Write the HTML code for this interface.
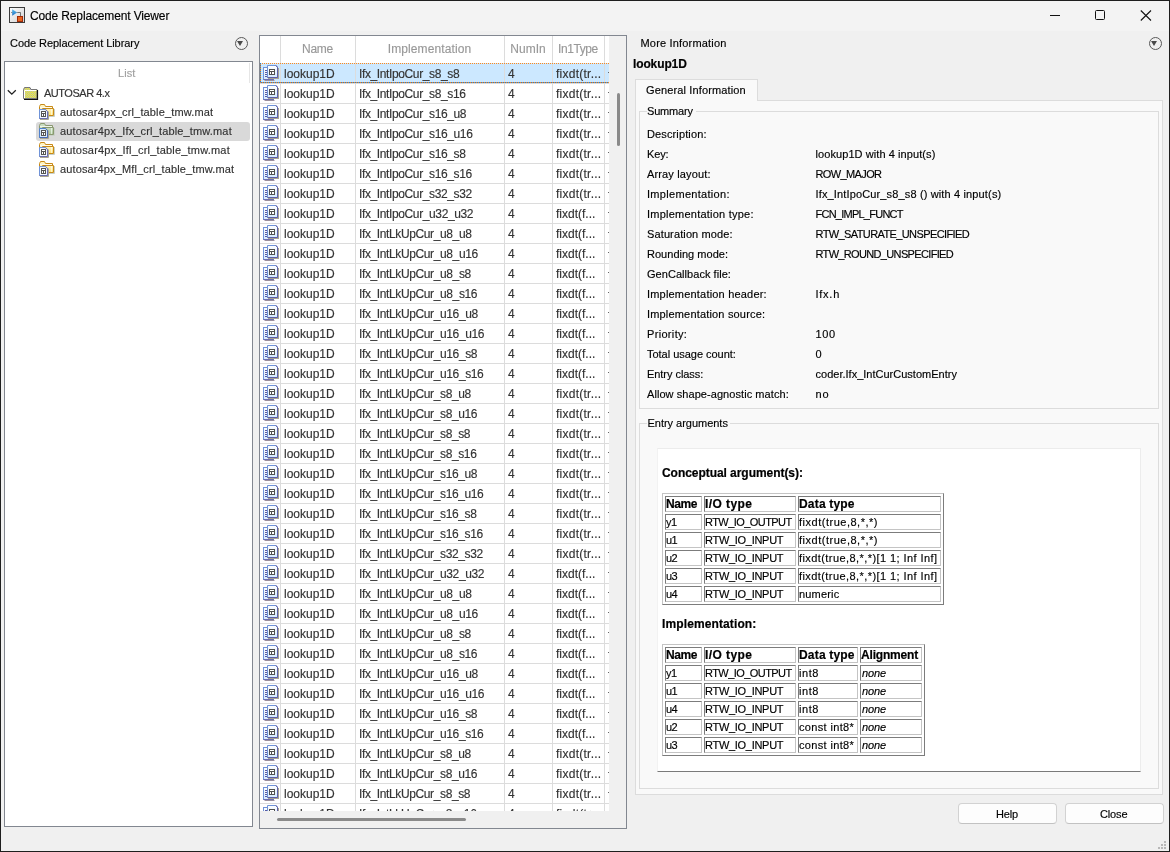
<!DOCTYPE html>
<html><head><meta charset="utf-8"><title>Code Replacement Viewer</title>
<style>
*{margin:0;padding:0;box-sizing:border-box}
html,body{width:1170px;height:852px;overflow:hidden}
body{position:relative;background:#f0f0f0;font-family:"Liberation Sans",sans-serif;font-size:11px;color:#000}
.a{position:absolute}
.t{position:absolute;white-space:nowrap;line-height:20px;height:20px;-webkit-text-stroke:0.15px currentColor}
.t.b{-webkit-text-stroke:0.2px #000}
.ddc{position:absolute;width:13px;height:13px;border:1.3px solid #585858;border-radius:50%}
.ddc:after{content:"";position:absolute;left:1.9px;top:3.3px;border-left:3.9px solid transparent;border-right:3.9px solid transparent;border-top:5.2px solid #4a4a4a}
.btn{position:absolute;top:803px;width:99px;height:21px;background:#fdfdfd;border:1px solid #d2d2d2;border-bottom-color:#c2c2c2;border-radius:4px}
</style></head><body><div class="a" style="left:0;top:0;width:1170px;height:852px;will-change:transform">
<div class="a" style="left:1px;top:1px;width:1168px;height:30px;background:#f3f3f3"></div>
<svg class="a" style="left:9px;top:7px" width="16" height="16" viewBox="0 0 16 16"><defs><linearGradient id="ig" x1="0" y1="0" x2="1" y2="1"><stop offset="0" stop-color="#ffffff"/><stop offset="1" stop-color="#d0d0d0"/></linearGradient><linearGradient id="tri" x1="0" y1="0" x2="0" y2="1"><stop offset="0" stop-color="#5cc0f0"/><stop offset="1" stop-color="#1f6fc0"/></linearGradient></defs><rect x="0.5" y="0.5" width="15" height="15" fill="url(#ig)" stroke="#3c3c3c"/><path d="M3.2 2.2v6.6l5-3.3z" fill="url(#tri)"/><path d="M2.2 5.5h1M8.2 5.5h3.3v4" stroke="#444" fill="none" stroke-width="0.7"/><rect x="8.5" y="9.5" width="5" height="5" fill="#e8641e" stroke="#a02a08" stroke-width="1"/></svg>
<div class="t" style="left:30px;top:6px;font-size:12px;color:#000;letter-spacing:-0.142px;">Code Replacement Viewer</div>
<div class="a" style="left:1050px;top:15px;width:10px;height:1px;background:#111"></div>
<div class="a" style="left:1095px;top:10px;width:10px;height:10px;border:1px solid #111;border-radius:1.5px"></div>
<svg class="a" style="left:1140px;top:10px" width="12" height="11" viewBox="0 0 12 11"><path d="M0.8 0.5L11 10.5M11 0.5L0.8 10.5" stroke="#111" stroke-width="1.1"/></svg>
<div class="t" style="left:10px;top:33px;font-size:11px;color:#000;letter-spacing:-0.063px;">Code Replacement Library</div>
<div class="ddc" style="left:234.5px;top:36.5px"></div>
<div class="a" style="left:4px;top:61px;width:249px;height:766px;background:#fff;border:1px solid #828790"></div>
<div class="t" style="left:118px;top:63px;font-size:11px;color:#a0a0a0;letter-spacing:0.094px;">List</div>
<div class="a" style="left:249px;top:63px;width:1px;height:20px;background:#e6e6e6"></div>
<svg class="a" style="left:7px;top:89px" width="10" height="7" viewBox="0 0 10 7"><path d="M0.8 1.2L4.8 5.2L8.8 1.2" stroke="#222" stroke-width="1.3" fill="none"/></svg>
<svg class="a" style="left:22px;top:86px" width="17" height="15" viewBox="0 0 17 15"><defs><pattern id="chk" width="2" height="2" patternUnits="userSpaceOnUse"><rect width="2" height="2" fill="#b4b4c8"/><rect width="1" height="1" fill="#ffff00"/><rect x="1" y="1" width="1" height="1" fill="#f0f020"/></pattern></defs><path d="M1.5 12.5V3.5l1-2h5.5l1 2h6v9z" fill="url(#chk)" stroke="#777"/><path d="M2.5 12V4.5h12" stroke="#fff" fill="none"/><path d="M2 13.5h13.5V4" stroke="#111" fill="none" stroke-width="1.2"/></svg>
<div class="t" style="left:44px;top:83px;font-size:11px;color:#333;letter-spacing:-0.481px;">AUTOSAR 4.x</div>
<div class="a" style="left:36px;top:122px;width:214px;height:19px;background:#d9d9d9;border-radius:3px"></div>
<svg class="a" style="left:38px;top:103px" width="18" height="18" viewBox="0 0 18 18"><defs><linearGradient id="fg103" x1="0" y1="0" x2="0" y2="1"><stop offset="0" stop-color="#fff4c0"/><stop offset="1" stop-color="#ffe070"/></linearGradient></defs><path d="M1.5 12.5V3.5l1-2h4l1 2h7v9z" fill="#fff4c0" stroke="#c88a18"/><path d="M2 4.5h12" stroke="#fff" stroke-opacity="0.7"/><path d="M4.5 5.5h11v7h-11z" fill="url(#fg103)" stroke="#c88a18"/><path d="M13.5 6v6" stroke="#fff" stroke-opacity="0.6"/><path d="M16.5 6v7.5h-11" stroke="#c8d0c8" fill="none"/><path d="M1.5 6.5h6l2 2v7h-8z" fill="#f2f8ff" stroke="#6f93d8"/><path d="M9.5 8.5v7h-8" stroke="#6b6db0" fill="none"/><path d="M2 16.5h8.5v-8" stroke="#a8a490" fill="none"/><path d="M7 6.5h1l1.5 1.5v1z" fill="#6b6db0"/><rect x="3.5" y="8.5" width="4" height="5" fill="#fff" stroke="#555"/><path d="M4 10.5h3M5.5 11v2" stroke="#555"/></svg>
<div class="t" style="left:60px;top:102px;font-size:11px;color:#333;letter-spacing:0.141px;">autosar4px_crl_table_tmw.mat</div>
<svg class="a" style="left:38px;top:122px" width="18" height="18" viewBox="0 0 18 18"><defs><linearGradient id="fg122" x1="0" y1="0" x2="0" y2="1"><stop offset="0" stop-color="#c8dcc0"/><stop offset="1" stop-color="#a8c498"/></linearGradient></defs><path d="M1.5 12.5V3.5l1-2h4l1 2h7v9z" fill="#c8dcc0" stroke="#8a9870"/><path d="M2 4.5h12" stroke="#fff" stroke-opacity="0.7"/><path d="M4.5 5.5h11v7h-11z" fill="url(#fg122)" stroke="#8a9870"/><path d="M13.5 6v6" stroke="#fff" stroke-opacity="0.6"/><path d="M16.5 6v7.5h-11" stroke="#c8d0c8" fill="none"/><path d="M1.5 6.5h6l2 2v7h-8z" fill="#d8eafc" stroke="#4f80cc"/><path d="M9.5 8.5v7h-8" stroke="#4868b0" fill="none"/><path d="M2 16.5h8.5v-8" stroke="#a8a490" fill="none"/><path d="M7 6.5h1l1.5 1.5v1z" fill="#4868b0"/><rect x="3.5" y="8.5" width="4" height="5" fill="#fff" stroke="#555"/><path d="M4 10.5h3M5.5 11v2" stroke="#555"/></svg>
<div class="t" style="left:60px;top:121px;font-size:11px;color:#333;letter-spacing:0.154px;">autosar4px_Ifx_crl_table_tmw.mat</div>
<svg class="a" style="left:38px;top:141px" width="18" height="18" viewBox="0 0 18 18"><defs><linearGradient id="fg141" x1="0" y1="0" x2="0" y2="1"><stop offset="0" stop-color="#fff4c0"/><stop offset="1" stop-color="#ffe070"/></linearGradient></defs><path d="M1.5 12.5V3.5l1-2h4l1 2h7v9z" fill="#fff4c0" stroke="#c88a18"/><path d="M2 4.5h12" stroke="#fff" stroke-opacity="0.7"/><path d="M4.5 5.5h11v7h-11z" fill="url(#fg141)" stroke="#c88a18"/><path d="M13.5 6v6" stroke="#fff" stroke-opacity="0.6"/><path d="M16.5 6v7.5h-11" stroke="#c8d0c8" fill="none"/><path d="M1.5 6.5h6l2 2v7h-8z" fill="#f2f8ff" stroke="#6f93d8"/><path d="M9.5 8.5v7h-8" stroke="#6b6db0" fill="none"/><path d="M2 16.5h8.5v-8" stroke="#a8a490" fill="none"/><path d="M7 6.5h1l1.5 1.5v1z" fill="#6b6db0"/><rect x="3.5" y="8.5" width="4" height="5" fill="#fff" stroke="#555"/><path d="M4 10.5h3M5.5 11v2" stroke="#555"/></svg>
<div class="t" style="left:60px;top:140px;font-size:11px;color:#333;letter-spacing:0.188px;">autosar4px_Ifl_crl_table_tmw.mat</div>
<svg class="a" style="left:38px;top:160px" width="18" height="18" viewBox="0 0 18 18"><defs><linearGradient id="fg160" x1="0" y1="0" x2="0" y2="1"><stop offset="0" stop-color="#fff4c0"/><stop offset="1" stop-color="#ffe070"/></linearGradient></defs><path d="M1.5 12.5V3.5l1-2h4l1 2h7v9z" fill="#fff4c0" stroke="#c88a18"/><path d="M2 4.5h12" stroke="#fff" stroke-opacity="0.7"/><path d="M4.5 5.5h11v7h-11z" fill="url(#fg160)" stroke="#c88a18"/><path d="M13.5 6v6" stroke="#fff" stroke-opacity="0.6"/><path d="M16.5 6v7.5h-11" stroke="#c8d0c8" fill="none"/><path d="M1.5 6.5h6l2 2v7h-8z" fill="#f2f8ff" stroke="#6f93d8"/><path d="M9.5 8.5v7h-8" stroke="#6b6db0" fill="none"/><path d="M2 16.5h8.5v-8" stroke="#a8a490" fill="none"/><path d="M7 6.5h1l1.5 1.5v1z" fill="#6b6db0"/><rect x="3.5" y="8.5" width="4" height="5" fill="#fff" stroke="#555"/><path d="M4 10.5h3M5.5 11v2" stroke="#555"/></svg>
<div class="t" style="left:60px;top:159px;font-size:11px;color:#333;letter-spacing:0.130px;">autosar4px_Mfl_crl_table_tmw.mat</div>
<div class="a" style="left:259px;top:35px;width:368px;height:794px;background:#f0f0f0;border:1px solid #828790"></div>
<div class="a" style="left:260px;top:36px;width:349px;height:775px;background:#fff"></div>
<svg class="a" width="0" height="0" style="left:0;top:0"><defs><linearGradient id="dg" x1="0" y1="0" x2="0" y2="1"><stop offset="0" stop-color="#ffffff"/><stop offset="1" stop-color="#d4eaff"/></linearGradient></defs></svg>
<div class="a" style="left:260px;top:63px;width:349px;height:20px;background:#cce8ff"></div>
<div class="a" style="left:260px;top:83px;width:349px;height:1px;background:#dcdcdc"></div>
<div class="a" style="left:260px;top:103px;width:349px;height:1px;background:#dcdcdc"></div>
<div class="a" style="left:260px;top:123px;width:349px;height:1px;background:#dcdcdc"></div>
<div class="a" style="left:260px;top:143px;width:349px;height:1px;background:#dcdcdc"></div>
<div class="a" style="left:260px;top:163px;width:349px;height:1px;background:#dcdcdc"></div>
<div class="a" style="left:260px;top:183px;width:349px;height:1px;background:#dcdcdc"></div>
<div class="a" style="left:260px;top:203px;width:349px;height:1px;background:#dcdcdc"></div>
<div class="a" style="left:260px;top:223px;width:349px;height:1px;background:#dcdcdc"></div>
<div class="a" style="left:260px;top:243px;width:349px;height:1px;background:#dcdcdc"></div>
<div class="a" style="left:260px;top:263px;width:349px;height:1px;background:#dcdcdc"></div>
<div class="a" style="left:260px;top:283px;width:349px;height:1px;background:#dcdcdc"></div>
<div class="a" style="left:260px;top:303px;width:349px;height:1px;background:#dcdcdc"></div>
<div class="a" style="left:260px;top:323px;width:349px;height:1px;background:#dcdcdc"></div>
<div class="a" style="left:260px;top:343px;width:349px;height:1px;background:#dcdcdc"></div>
<div class="a" style="left:260px;top:363px;width:349px;height:1px;background:#dcdcdc"></div>
<div class="a" style="left:260px;top:383px;width:349px;height:1px;background:#dcdcdc"></div>
<div class="a" style="left:260px;top:403px;width:349px;height:1px;background:#dcdcdc"></div>
<div class="a" style="left:260px;top:423px;width:349px;height:1px;background:#dcdcdc"></div>
<div class="a" style="left:260px;top:443px;width:349px;height:1px;background:#dcdcdc"></div>
<div class="a" style="left:260px;top:463px;width:349px;height:1px;background:#dcdcdc"></div>
<div class="a" style="left:260px;top:483px;width:349px;height:1px;background:#dcdcdc"></div>
<div class="a" style="left:260px;top:503px;width:349px;height:1px;background:#dcdcdc"></div>
<div class="a" style="left:260px;top:523px;width:349px;height:1px;background:#dcdcdc"></div>
<div class="a" style="left:260px;top:543px;width:349px;height:1px;background:#dcdcdc"></div>
<div class="a" style="left:260px;top:563px;width:349px;height:1px;background:#dcdcdc"></div>
<div class="a" style="left:260px;top:583px;width:349px;height:1px;background:#dcdcdc"></div>
<div class="a" style="left:260px;top:603px;width:349px;height:1px;background:#dcdcdc"></div>
<div class="a" style="left:260px;top:623px;width:349px;height:1px;background:#dcdcdc"></div>
<div class="a" style="left:260px;top:643px;width:349px;height:1px;background:#dcdcdc"></div>
<div class="a" style="left:260px;top:663px;width:349px;height:1px;background:#dcdcdc"></div>
<div class="a" style="left:260px;top:683px;width:349px;height:1px;background:#dcdcdc"></div>
<div class="a" style="left:260px;top:703px;width:349px;height:1px;background:#dcdcdc"></div>
<div class="a" style="left:260px;top:723px;width:349px;height:1px;background:#dcdcdc"></div>
<div class="a" style="left:260px;top:743px;width:349px;height:1px;background:#dcdcdc"></div>
<div class="a" style="left:260px;top:763px;width:349px;height:1px;background:#dcdcdc"></div>
<div class="a" style="left:260px;top:783px;width:349px;height:1px;background:#dcdcdc"></div>
<div class="a" style="left:260px;top:803px;width:349px;height:1px;background:#dcdcdc"></div>
<div class="a" style="left:280px;top:36px;width:1px;height:775px;background:#dcdcdc"></div>
<div class="a" style="left:355px;top:36px;width:1px;height:775px;background:#dcdcdc"></div>
<div class="a" style="left:504px;top:36px;width:1px;height:775px;background:#dcdcdc"></div>
<div class="a" style="left:552px;top:36px;width:1px;height:775px;background:#dcdcdc"></div>
<div class="a" style="left:604px;top:36px;width:1px;height:775px;background:#dcdcdc"></div>
<div class="a" style="left:260px;top:63px;width:349px;height:1px;background:repeating-linear-gradient(90deg,#ff8a1c 0 1px,transparent 1px 2px)"></div>
<div class="a" style="left:260px;top:82px;width:349px;height:1px;background:repeating-linear-gradient(90deg,#ff8a1c 0 1px,#1c7ed8 1px 2px)"></div>
<div class="a" style="left:260px;top:63px;width:1px;height:20px;background:repeating-linear-gradient(180deg,#1c7ed8 0 1px,#ff8a1c 1px 2px)"></div>
<div class="t" style="left:280px;top:39px;font-size:12px;color:#999;letter-spacing:-0.237px;width:75px;text-align:center;">Name</div>
<div class="t" style="left:355px;top:39px;font-size:12px;color:#999;letter-spacing:0.104px;width:149px;text-align:center;">Implementation</div>
<div class="t" style="left:504px;top:39px;font-size:12px;color:#999;letter-spacing:0.039px;width:48px;text-align:center;">NumIn</div>
<div class="t" style="left:552px;top:39px;font-size:12px;color:#999;letter-spacing:-0.416px;width:52px;text-align:center;">In1Type</div>
<svg class="a" style="left:262px;top:64px" width="18" height="18" viewBox="0 0 18 18"><path d="M2.5 16.5h10" stroke="#9a8f9e"/><rect x="1.5" y="3.5" width="10" height="12" fill="url(#dg)" stroke="#6f93d8"/><path d="M11.5 14v1.5h-10" stroke="#6b6db0" fill="none"/><path d="M3 6.5h2M3 8.5h2M3 10.5h2M3 12.5h2" stroke="#5b5aa0"/><path d="M16.5 4v11M6 14.5h10.5" stroke="#a8a290"/><path d="M5.5 1.5h8l2 2v10h-10z" fill="url(#dg)" stroke="#6f93d8"/><path d="M15.5 3.5v10h-10" stroke="#5d5fa8" fill="none"/><path d="M13 1h1l2 2v1z" fill="#5b5aa0"/><rect x="7.5" y="5.5" width="5" height="5" fill="#fff" stroke="#505050"/><path d="M8 7.5h4M9.5 8v2" stroke="#505050"/></svg>
<div class="t" style="left:284px;top:64px;font-size:12px;color:#333;">lookup1D</div>
<div class="t" style="left:359px;top:64px;font-size:12px;color:#333;letter-spacing:-0.38px;">Ifx_IntIpoCur_s8_s8</div>
<div class="t" style="left:508px;top:64px;font-size:12px;color:#333;">4</div>
<div class="t" style="left:556px;top:64px;font-size:12px;color:#333;letter-spacing:0.253px;">fixdt(tr...</div>
<div class="a" style="left:608px;top:72px;width:1px;height:1px;background:#666"></div>
<svg class="a" style="left:262px;top:84px" width="18" height="18" viewBox="0 0 18 18"><path d="M2.5 16.5h10" stroke="#9a8f9e"/><rect x="1.5" y="3.5" width="10" height="12" fill="url(#dg)" stroke="#6f93d8"/><path d="M11.5 14v1.5h-10" stroke="#6b6db0" fill="none"/><path d="M3 6.5h2M3 8.5h2M3 10.5h2M3 12.5h2" stroke="#5b5aa0"/><path d="M16.5 4v11M6 14.5h10.5" stroke="#a8a290"/><path d="M5.5 1.5h8l2 2v10h-10z" fill="url(#dg)" stroke="#6f93d8"/><path d="M15.5 3.5v10h-10" stroke="#5d5fa8" fill="none"/><path d="M13 1h1l2 2v1z" fill="#5b5aa0"/><rect x="7.5" y="5.5" width="5" height="5" fill="#fff" stroke="#505050"/><path d="M8 7.5h4M9.5 8v2" stroke="#505050"/></svg>
<div class="t" style="left:284px;top:84px;font-size:12px;color:#333;">lookup1D</div>
<div class="t" style="left:359px;top:84px;font-size:12px;color:#333;letter-spacing:-0.38px;">Ifx_IntIpoCur_s8_s16</div>
<div class="t" style="left:508px;top:84px;font-size:12px;color:#333;">4</div>
<div class="t" style="left:556px;top:84px;font-size:12px;color:#333;letter-spacing:0.253px;">fixdt(tr...</div>
<div class="a" style="left:608px;top:92px;width:1px;height:1px;background:#666"></div>
<svg class="a" style="left:262px;top:104px" width="18" height="18" viewBox="0 0 18 18"><path d="M2.5 16.5h10" stroke="#9a8f9e"/><rect x="1.5" y="3.5" width="10" height="12" fill="url(#dg)" stroke="#6f93d8"/><path d="M11.5 14v1.5h-10" stroke="#6b6db0" fill="none"/><path d="M3 6.5h2M3 8.5h2M3 10.5h2M3 12.5h2" stroke="#5b5aa0"/><path d="M16.5 4v11M6 14.5h10.5" stroke="#a8a290"/><path d="M5.5 1.5h8l2 2v10h-10z" fill="url(#dg)" stroke="#6f93d8"/><path d="M15.5 3.5v10h-10" stroke="#5d5fa8" fill="none"/><path d="M13 1h1l2 2v1z" fill="#5b5aa0"/><rect x="7.5" y="5.5" width="5" height="5" fill="#fff" stroke="#505050"/><path d="M8 7.5h4M9.5 8v2" stroke="#505050"/></svg>
<div class="t" style="left:284px;top:104px;font-size:12px;color:#333;">lookup1D</div>
<div class="t" style="left:359px;top:104px;font-size:12px;color:#333;letter-spacing:-0.38px;">Ifx_IntIpoCur_s16_u8</div>
<div class="t" style="left:508px;top:104px;font-size:12px;color:#333;">4</div>
<div class="t" style="left:556px;top:104px;font-size:12px;color:#333;letter-spacing:0.253px;">fixdt(tr...</div>
<div class="a" style="left:608px;top:112px;width:1px;height:1px;background:#666"></div>
<svg class="a" style="left:262px;top:124px" width="18" height="18" viewBox="0 0 18 18"><path d="M2.5 16.5h10" stroke="#9a8f9e"/><rect x="1.5" y="3.5" width="10" height="12" fill="url(#dg)" stroke="#6f93d8"/><path d="M11.5 14v1.5h-10" stroke="#6b6db0" fill="none"/><path d="M3 6.5h2M3 8.5h2M3 10.5h2M3 12.5h2" stroke="#5b5aa0"/><path d="M16.5 4v11M6 14.5h10.5" stroke="#a8a290"/><path d="M5.5 1.5h8l2 2v10h-10z" fill="url(#dg)" stroke="#6f93d8"/><path d="M15.5 3.5v10h-10" stroke="#5d5fa8" fill="none"/><path d="M13 1h1l2 2v1z" fill="#5b5aa0"/><rect x="7.5" y="5.5" width="5" height="5" fill="#fff" stroke="#505050"/><path d="M8 7.5h4M9.5 8v2" stroke="#505050"/></svg>
<div class="t" style="left:284px;top:124px;font-size:12px;color:#333;">lookup1D</div>
<div class="t" style="left:359px;top:124px;font-size:12px;color:#333;letter-spacing:-0.38px;">Ifx_IntIpoCur_s16_u16</div>
<div class="t" style="left:508px;top:124px;font-size:12px;color:#333;">4</div>
<div class="t" style="left:556px;top:124px;font-size:12px;color:#333;letter-spacing:0.253px;">fixdt(tr...</div>
<div class="a" style="left:608px;top:132px;width:1px;height:1px;background:#666"></div>
<svg class="a" style="left:262px;top:144px" width="18" height="18" viewBox="0 0 18 18"><path d="M2.5 16.5h10" stroke="#9a8f9e"/><rect x="1.5" y="3.5" width="10" height="12" fill="url(#dg)" stroke="#6f93d8"/><path d="M11.5 14v1.5h-10" stroke="#6b6db0" fill="none"/><path d="M3 6.5h2M3 8.5h2M3 10.5h2M3 12.5h2" stroke="#5b5aa0"/><path d="M16.5 4v11M6 14.5h10.5" stroke="#a8a290"/><path d="M5.5 1.5h8l2 2v10h-10z" fill="url(#dg)" stroke="#6f93d8"/><path d="M15.5 3.5v10h-10" stroke="#5d5fa8" fill="none"/><path d="M13 1h1l2 2v1z" fill="#5b5aa0"/><rect x="7.5" y="5.5" width="5" height="5" fill="#fff" stroke="#505050"/><path d="M8 7.5h4M9.5 8v2" stroke="#505050"/></svg>
<div class="t" style="left:284px;top:144px;font-size:12px;color:#333;">lookup1D</div>
<div class="t" style="left:359px;top:144px;font-size:12px;color:#333;letter-spacing:-0.38px;">Ifx_IntIpoCur_s16_s8</div>
<div class="t" style="left:508px;top:144px;font-size:12px;color:#333;">4</div>
<div class="t" style="left:556px;top:144px;font-size:12px;color:#333;letter-spacing:0.253px;">fixdt(tr...</div>
<div class="a" style="left:608px;top:152px;width:1px;height:1px;background:#666"></div>
<svg class="a" style="left:262px;top:164px" width="18" height="18" viewBox="0 0 18 18"><path d="M2.5 16.5h10" stroke="#9a8f9e"/><rect x="1.5" y="3.5" width="10" height="12" fill="url(#dg)" stroke="#6f93d8"/><path d="M11.5 14v1.5h-10" stroke="#6b6db0" fill="none"/><path d="M3 6.5h2M3 8.5h2M3 10.5h2M3 12.5h2" stroke="#5b5aa0"/><path d="M16.5 4v11M6 14.5h10.5" stroke="#a8a290"/><path d="M5.5 1.5h8l2 2v10h-10z" fill="url(#dg)" stroke="#6f93d8"/><path d="M15.5 3.5v10h-10" stroke="#5d5fa8" fill="none"/><path d="M13 1h1l2 2v1z" fill="#5b5aa0"/><rect x="7.5" y="5.5" width="5" height="5" fill="#fff" stroke="#505050"/><path d="M8 7.5h4M9.5 8v2" stroke="#505050"/></svg>
<div class="t" style="left:284px;top:164px;font-size:12px;color:#333;">lookup1D</div>
<div class="t" style="left:359px;top:164px;font-size:12px;color:#333;letter-spacing:-0.38px;">Ifx_IntIpoCur_s16_s16</div>
<div class="t" style="left:508px;top:164px;font-size:12px;color:#333;">4</div>
<div class="t" style="left:556px;top:164px;font-size:12px;color:#333;letter-spacing:0.253px;">fixdt(tr...</div>
<div class="a" style="left:608px;top:172px;width:1px;height:1px;background:#666"></div>
<svg class="a" style="left:262px;top:184px" width="18" height="18" viewBox="0 0 18 18"><path d="M2.5 16.5h10" stroke="#9a8f9e"/><rect x="1.5" y="3.5" width="10" height="12" fill="url(#dg)" stroke="#6f93d8"/><path d="M11.5 14v1.5h-10" stroke="#6b6db0" fill="none"/><path d="M3 6.5h2M3 8.5h2M3 10.5h2M3 12.5h2" stroke="#5b5aa0"/><path d="M16.5 4v11M6 14.5h10.5" stroke="#a8a290"/><path d="M5.5 1.5h8l2 2v10h-10z" fill="url(#dg)" stroke="#6f93d8"/><path d="M15.5 3.5v10h-10" stroke="#5d5fa8" fill="none"/><path d="M13 1h1l2 2v1z" fill="#5b5aa0"/><rect x="7.5" y="5.5" width="5" height="5" fill="#fff" stroke="#505050"/><path d="M8 7.5h4M9.5 8v2" stroke="#505050"/></svg>
<div class="t" style="left:284px;top:184px;font-size:12px;color:#333;">lookup1D</div>
<div class="t" style="left:359px;top:184px;font-size:12px;color:#333;letter-spacing:-0.38px;">Ifx_IntIpoCur_s32_s32</div>
<div class="t" style="left:508px;top:184px;font-size:12px;color:#333;">4</div>
<div class="t" style="left:556px;top:184px;font-size:12px;color:#333;letter-spacing:0.253px;">fixdt(tr...</div>
<div class="a" style="left:608px;top:192px;width:1px;height:1px;background:#666"></div>
<svg class="a" style="left:262px;top:204px" width="18" height="18" viewBox="0 0 18 18"><path d="M2.5 16.5h10" stroke="#9a8f9e"/><rect x="1.5" y="3.5" width="10" height="12" fill="url(#dg)" stroke="#6f93d8"/><path d="M11.5 14v1.5h-10" stroke="#6b6db0" fill="none"/><path d="M3 6.5h2M3 8.5h2M3 10.5h2M3 12.5h2" stroke="#5b5aa0"/><path d="M16.5 4v11M6 14.5h10.5" stroke="#a8a290"/><path d="M5.5 1.5h8l2 2v10h-10z" fill="url(#dg)" stroke="#6f93d8"/><path d="M15.5 3.5v10h-10" stroke="#5d5fa8" fill="none"/><path d="M13 1h1l2 2v1z" fill="#5b5aa0"/><rect x="7.5" y="5.5" width="5" height="5" fill="#fff" stroke="#505050"/><path d="M8 7.5h4M9.5 8v2" stroke="#505050"/></svg>
<div class="t" style="left:284px;top:204px;font-size:12px;color:#333;">lookup1D</div>
<div class="t" style="left:359px;top:204px;font-size:12px;color:#333;letter-spacing:-0.38px;">Ifx_IntIpoCur_u32_u32</div>
<div class="t" style="left:508px;top:204px;font-size:12px;color:#333;">4</div>
<div class="t" style="left:556px;top:204px;font-size:12px;color:#333;">fixdt(f...</div>
<div class="a" style="left:608px;top:212px;width:1px;height:1px;background:#666"></div>
<svg class="a" style="left:262px;top:224px" width="18" height="18" viewBox="0 0 18 18"><path d="M2.5 16.5h10" stroke="#9a8f9e"/><rect x="1.5" y="3.5" width="10" height="12" fill="url(#dg)" stroke="#6f93d8"/><path d="M11.5 14v1.5h-10" stroke="#6b6db0" fill="none"/><path d="M3 6.5h2M3 8.5h2M3 10.5h2M3 12.5h2" stroke="#5b5aa0"/><path d="M16.5 4v11M6 14.5h10.5" stroke="#a8a290"/><path d="M5.5 1.5h8l2 2v10h-10z" fill="url(#dg)" stroke="#6f93d8"/><path d="M15.5 3.5v10h-10" stroke="#5d5fa8" fill="none"/><path d="M13 1h1l2 2v1z" fill="#5b5aa0"/><rect x="7.5" y="5.5" width="5" height="5" fill="#fff" stroke="#505050"/><path d="M8 7.5h4M9.5 8v2" stroke="#505050"/></svg>
<div class="t" style="left:284px;top:224px;font-size:12px;color:#333;">lookup1D</div>
<div class="t" style="left:359px;top:224px;font-size:12px;color:#333;letter-spacing:-0.38px;">Ifx_IntLkUpCur_u8_u8</div>
<div class="t" style="left:508px;top:224px;font-size:12px;color:#333;">4</div>
<div class="t" style="left:556px;top:224px;font-size:12px;color:#333;">fixdt(f...</div>
<div class="a" style="left:608px;top:232px;width:1px;height:1px;background:#666"></div>
<svg class="a" style="left:262px;top:244px" width="18" height="18" viewBox="0 0 18 18"><path d="M2.5 16.5h10" stroke="#9a8f9e"/><rect x="1.5" y="3.5" width="10" height="12" fill="url(#dg)" stroke="#6f93d8"/><path d="M11.5 14v1.5h-10" stroke="#6b6db0" fill="none"/><path d="M3 6.5h2M3 8.5h2M3 10.5h2M3 12.5h2" stroke="#5b5aa0"/><path d="M16.5 4v11M6 14.5h10.5" stroke="#a8a290"/><path d="M5.5 1.5h8l2 2v10h-10z" fill="url(#dg)" stroke="#6f93d8"/><path d="M15.5 3.5v10h-10" stroke="#5d5fa8" fill="none"/><path d="M13 1h1l2 2v1z" fill="#5b5aa0"/><rect x="7.5" y="5.5" width="5" height="5" fill="#fff" stroke="#505050"/><path d="M8 7.5h4M9.5 8v2" stroke="#505050"/></svg>
<div class="t" style="left:284px;top:244px;font-size:12px;color:#333;">lookup1D</div>
<div class="t" style="left:359px;top:244px;font-size:12px;color:#333;letter-spacing:-0.38px;">Ifx_IntLkUpCur_u8_u16</div>
<div class="t" style="left:508px;top:244px;font-size:12px;color:#333;">4</div>
<div class="t" style="left:556px;top:244px;font-size:12px;color:#333;">fixdt(f...</div>
<div class="a" style="left:608px;top:252px;width:1px;height:1px;background:#666"></div>
<svg class="a" style="left:262px;top:264px" width="18" height="18" viewBox="0 0 18 18"><path d="M2.5 16.5h10" stroke="#9a8f9e"/><rect x="1.5" y="3.5" width="10" height="12" fill="url(#dg)" stroke="#6f93d8"/><path d="M11.5 14v1.5h-10" stroke="#6b6db0" fill="none"/><path d="M3 6.5h2M3 8.5h2M3 10.5h2M3 12.5h2" stroke="#5b5aa0"/><path d="M16.5 4v11M6 14.5h10.5" stroke="#a8a290"/><path d="M5.5 1.5h8l2 2v10h-10z" fill="url(#dg)" stroke="#6f93d8"/><path d="M15.5 3.5v10h-10" stroke="#5d5fa8" fill="none"/><path d="M13 1h1l2 2v1z" fill="#5b5aa0"/><rect x="7.5" y="5.5" width="5" height="5" fill="#fff" stroke="#505050"/><path d="M8 7.5h4M9.5 8v2" stroke="#505050"/></svg>
<div class="t" style="left:284px;top:264px;font-size:12px;color:#333;">lookup1D</div>
<div class="t" style="left:359px;top:264px;font-size:12px;color:#333;letter-spacing:-0.38px;">Ifx_IntLkUpCur_u8_s8</div>
<div class="t" style="left:508px;top:264px;font-size:12px;color:#333;">4</div>
<div class="t" style="left:556px;top:264px;font-size:12px;color:#333;">fixdt(f...</div>
<div class="a" style="left:608px;top:272px;width:1px;height:1px;background:#666"></div>
<svg class="a" style="left:262px;top:284px" width="18" height="18" viewBox="0 0 18 18"><path d="M2.5 16.5h10" stroke="#9a8f9e"/><rect x="1.5" y="3.5" width="10" height="12" fill="url(#dg)" stroke="#6f93d8"/><path d="M11.5 14v1.5h-10" stroke="#6b6db0" fill="none"/><path d="M3 6.5h2M3 8.5h2M3 10.5h2M3 12.5h2" stroke="#5b5aa0"/><path d="M16.5 4v11M6 14.5h10.5" stroke="#a8a290"/><path d="M5.5 1.5h8l2 2v10h-10z" fill="url(#dg)" stroke="#6f93d8"/><path d="M15.5 3.5v10h-10" stroke="#5d5fa8" fill="none"/><path d="M13 1h1l2 2v1z" fill="#5b5aa0"/><rect x="7.5" y="5.5" width="5" height="5" fill="#fff" stroke="#505050"/><path d="M8 7.5h4M9.5 8v2" stroke="#505050"/></svg>
<div class="t" style="left:284px;top:284px;font-size:12px;color:#333;">lookup1D</div>
<div class="t" style="left:359px;top:284px;font-size:12px;color:#333;letter-spacing:-0.38px;">Ifx_IntLkUpCur_u8_s16</div>
<div class="t" style="left:508px;top:284px;font-size:12px;color:#333;">4</div>
<div class="t" style="left:556px;top:284px;font-size:12px;color:#333;">fixdt(f...</div>
<div class="a" style="left:608px;top:292px;width:1px;height:1px;background:#666"></div>
<svg class="a" style="left:262px;top:304px" width="18" height="18" viewBox="0 0 18 18"><path d="M2.5 16.5h10" stroke="#9a8f9e"/><rect x="1.5" y="3.5" width="10" height="12" fill="url(#dg)" stroke="#6f93d8"/><path d="M11.5 14v1.5h-10" stroke="#6b6db0" fill="none"/><path d="M3 6.5h2M3 8.5h2M3 10.5h2M3 12.5h2" stroke="#5b5aa0"/><path d="M16.5 4v11M6 14.5h10.5" stroke="#a8a290"/><path d="M5.5 1.5h8l2 2v10h-10z" fill="url(#dg)" stroke="#6f93d8"/><path d="M15.5 3.5v10h-10" stroke="#5d5fa8" fill="none"/><path d="M13 1h1l2 2v1z" fill="#5b5aa0"/><rect x="7.5" y="5.5" width="5" height="5" fill="#fff" stroke="#505050"/><path d="M8 7.5h4M9.5 8v2" stroke="#505050"/></svg>
<div class="t" style="left:284px;top:304px;font-size:12px;color:#333;">lookup1D</div>
<div class="t" style="left:359px;top:304px;font-size:12px;color:#333;letter-spacing:-0.38px;">Ifx_IntLkUpCur_u16_u8</div>
<div class="t" style="left:508px;top:304px;font-size:12px;color:#333;">4</div>
<div class="t" style="left:556px;top:304px;font-size:12px;color:#333;">fixdt(f...</div>
<div class="a" style="left:608px;top:312px;width:1px;height:1px;background:#666"></div>
<svg class="a" style="left:262px;top:324px" width="18" height="18" viewBox="0 0 18 18"><path d="M2.5 16.5h10" stroke="#9a8f9e"/><rect x="1.5" y="3.5" width="10" height="12" fill="url(#dg)" stroke="#6f93d8"/><path d="M11.5 14v1.5h-10" stroke="#6b6db0" fill="none"/><path d="M3 6.5h2M3 8.5h2M3 10.5h2M3 12.5h2" stroke="#5b5aa0"/><path d="M16.5 4v11M6 14.5h10.5" stroke="#a8a290"/><path d="M5.5 1.5h8l2 2v10h-10z" fill="url(#dg)" stroke="#6f93d8"/><path d="M15.5 3.5v10h-10" stroke="#5d5fa8" fill="none"/><path d="M13 1h1l2 2v1z" fill="#5b5aa0"/><rect x="7.5" y="5.5" width="5" height="5" fill="#fff" stroke="#505050"/><path d="M8 7.5h4M9.5 8v2" stroke="#505050"/></svg>
<div class="t" style="left:284px;top:324px;font-size:12px;color:#333;">lookup1D</div>
<div class="t" style="left:359px;top:324px;font-size:12px;color:#333;letter-spacing:-0.38px;">Ifx_IntLkUpCur_u16_u16</div>
<div class="t" style="left:508px;top:324px;font-size:12px;color:#333;">4</div>
<div class="t" style="left:556px;top:324px;font-size:12px;color:#333;">fixdt(f...</div>
<div class="a" style="left:608px;top:332px;width:1px;height:1px;background:#666"></div>
<svg class="a" style="left:262px;top:344px" width="18" height="18" viewBox="0 0 18 18"><path d="M2.5 16.5h10" stroke="#9a8f9e"/><rect x="1.5" y="3.5" width="10" height="12" fill="url(#dg)" stroke="#6f93d8"/><path d="M11.5 14v1.5h-10" stroke="#6b6db0" fill="none"/><path d="M3 6.5h2M3 8.5h2M3 10.5h2M3 12.5h2" stroke="#5b5aa0"/><path d="M16.5 4v11M6 14.5h10.5" stroke="#a8a290"/><path d="M5.5 1.5h8l2 2v10h-10z" fill="url(#dg)" stroke="#6f93d8"/><path d="M15.5 3.5v10h-10" stroke="#5d5fa8" fill="none"/><path d="M13 1h1l2 2v1z" fill="#5b5aa0"/><rect x="7.5" y="5.5" width="5" height="5" fill="#fff" stroke="#505050"/><path d="M8 7.5h4M9.5 8v2" stroke="#505050"/></svg>
<div class="t" style="left:284px;top:344px;font-size:12px;color:#333;">lookup1D</div>
<div class="t" style="left:359px;top:344px;font-size:12px;color:#333;letter-spacing:-0.38px;">Ifx_IntLkUpCur_u16_s8</div>
<div class="t" style="left:508px;top:344px;font-size:12px;color:#333;">4</div>
<div class="t" style="left:556px;top:344px;font-size:12px;color:#333;">fixdt(f...</div>
<div class="a" style="left:608px;top:352px;width:1px;height:1px;background:#666"></div>
<svg class="a" style="left:262px;top:364px" width="18" height="18" viewBox="0 0 18 18"><path d="M2.5 16.5h10" stroke="#9a8f9e"/><rect x="1.5" y="3.5" width="10" height="12" fill="url(#dg)" stroke="#6f93d8"/><path d="M11.5 14v1.5h-10" stroke="#6b6db0" fill="none"/><path d="M3 6.5h2M3 8.5h2M3 10.5h2M3 12.5h2" stroke="#5b5aa0"/><path d="M16.5 4v11M6 14.5h10.5" stroke="#a8a290"/><path d="M5.5 1.5h8l2 2v10h-10z" fill="url(#dg)" stroke="#6f93d8"/><path d="M15.5 3.5v10h-10" stroke="#5d5fa8" fill="none"/><path d="M13 1h1l2 2v1z" fill="#5b5aa0"/><rect x="7.5" y="5.5" width="5" height="5" fill="#fff" stroke="#505050"/><path d="M8 7.5h4M9.5 8v2" stroke="#505050"/></svg>
<div class="t" style="left:284px;top:364px;font-size:12px;color:#333;">lookup1D</div>
<div class="t" style="left:359px;top:364px;font-size:12px;color:#333;letter-spacing:-0.38px;">Ifx_IntLkUpCur_u16_s16</div>
<div class="t" style="left:508px;top:364px;font-size:12px;color:#333;">4</div>
<div class="t" style="left:556px;top:364px;font-size:12px;color:#333;">fixdt(f...</div>
<div class="a" style="left:608px;top:372px;width:1px;height:1px;background:#666"></div>
<svg class="a" style="left:262px;top:384px" width="18" height="18" viewBox="0 0 18 18"><path d="M2.5 16.5h10" stroke="#9a8f9e"/><rect x="1.5" y="3.5" width="10" height="12" fill="url(#dg)" stroke="#6f93d8"/><path d="M11.5 14v1.5h-10" stroke="#6b6db0" fill="none"/><path d="M3 6.5h2M3 8.5h2M3 10.5h2M3 12.5h2" stroke="#5b5aa0"/><path d="M16.5 4v11M6 14.5h10.5" stroke="#a8a290"/><path d="M5.5 1.5h8l2 2v10h-10z" fill="url(#dg)" stroke="#6f93d8"/><path d="M15.5 3.5v10h-10" stroke="#5d5fa8" fill="none"/><path d="M13 1h1l2 2v1z" fill="#5b5aa0"/><rect x="7.5" y="5.5" width="5" height="5" fill="#fff" stroke="#505050"/><path d="M8 7.5h4M9.5 8v2" stroke="#505050"/></svg>
<div class="t" style="left:284px;top:384px;font-size:12px;color:#333;">lookup1D</div>
<div class="t" style="left:359px;top:384px;font-size:12px;color:#333;letter-spacing:-0.38px;">Ifx_IntLkUpCur_s8_u8</div>
<div class="t" style="left:508px;top:384px;font-size:12px;color:#333;">4</div>
<div class="t" style="left:556px;top:384px;font-size:12px;color:#333;letter-spacing:0.253px;">fixdt(tr...</div>
<div class="a" style="left:608px;top:392px;width:1px;height:1px;background:#666"></div>
<svg class="a" style="left:262px;top:404px" width="18" height="18" viewBox="0 0 18 18"><path d="M2.5 16.5h10" stroke="#9a8f9e"/><rect x="1.5" y="3.5" width="10" height="12" fill="url(#dg)" stroke="#6f93d8"/><path d="M11.5 14v1.5h-10" stroke="#6b6db0" fill="none"/><path d="M3 6.5h2M3 8.5h2M3 10.5h2M3 12.5h2" stroke="#5b5aa0"/><path d="M16.5 4v11M6 14.5h10.5" stroke="#a8a290"/><path d="M5.5 1.5h8l2 2v10h-10z" fill="url(#dg)" stroke="#6f93d8"/><path d="M15.5 3.5v10h-10" stroke="#5d5fa8" fill="none"/><path d="M13 1h1l2 2v1z" fill="#5b5aa0"/><rect x="7.5" y="5.5" width="5" height="5" fill="#fff" stroke="#505050"/><path d="M8 7.5h4M9.5 8v2" stroke="#505050"/></svg>
<div class="t" style="left:284px;top:404px;font-size:12px;color:#333;">lookup1D</div>
<div class="t" style="left:359px;top:404px;font-size:12px;color:#333;letter-spacing:-0.38px;">Ifx_IntLkUpCur_s8_u16</div>
<div class="t" style="left:508px;top:404px;font-size:12px;color:#333;">4</div>
<div class="t" style="left:556px;top:404px;font-size:12px;color:#333;letter-spacing:0.253px;">fixdt(tr...</div>
<div class="a" style="left:608px;top:412px;width:1px;height:1px;background:#666"></div>
<svg class="a" style="left:262px;top:424px" width="18" height="18" viewBox="0 0 18 18"><path d="M2.5 16.5h10" stroke="#9a8f9e"/><rect x="1.5" y="3.5" width="10" height="12" fill="url(#dg)" stroke="#6f93d8"/><path d="M11.5 14v1.5h-10" stroke="#6b6db0" fill="none"/><path d="M3 6.5h2M3 8.5h2M3 10.5h2M3 12.5h2" stroke="#5b5aa0"/><path d="M16.5 4v11M6 14.5h10.5" stroke="#a8a290"/><path d="M5.5 1.5h8l2 2v10h-10z" fill="url(#dg)" stroke="#6f93d8"/><path d="M15.5 3.5v10h-10" stroke="#5d5fa8" fill="none"/><path d="M13 1h1l2 2v1z" fill="#5b5aa0"/><rect x="7.5" y="5.5" width="5" height="5" fill="#fff" stroke="#505050"/><path d="M8 7.5h4M9.5 8v2" stroke="#505050"/></svg>
<div class="t" style="left:284px;top:424px;font-size:12px;color:#333;">lookup1D</div>
<div class="t" style="left:359px;top:424px;font-size:12px;color:#333;letter-spacing:-0.38px;">Ifx_IntLkUpCur_s8_s8</div>
<div class="t" style="left:508px;top:424px;font-size:12px;color:#333;">4</div>
<div class="t" style="left:556px;top:424px;font-size:12px;color:#333;letter-spacing:0.253px;">fixdt(tr...</div>
<div class="a" style="left:608px;top:432px;width:1px;height:1px;background:#666"></div>
<svg class="a" style="left:262px;top:444px" width="18" height="18" viewBox="0 0 18 18"><path d="M2.5 16.5h10" stroke="#9a8f9e"/><rect x="1.5" y="3.5" width="10" height="12" fill="url(#dg)" stroke="#6f93d8"/><path d="M11.5 14v1.5h-10" stroke="#6b6db0" fill="none"/><path d="M3 6.5h2M3 8.5h2M3 10.5h2M3 12.5h2" stroke="#5b5aa0"/><path d="M16.5 4v11M6 14.5h10.5" stroke="#a8a290"/><path d="M5.5 1.5h8l2 2v10h-10z" fill="url(#dg)" stroke="#6f93d8"/><path d="M15.5 3.5v10h-10" stroke="#5d5fa8" fill="none"/><path d="M13 1h1l2 2v1z" fill="#5b5aa0"/><rect x="7.5" y="5.5" width="5" height="5" fill="#fff" stroke="#505050"/><path d="M8 7.5h4M9.5 8v2" stroke="#505050"/></svg>
<div class="t" style="left:284px;top:444px;font-size:12px;color:#333;">lookup1D</div>
<div class="t" style="left:359px;top:444px;font-size:12px;color:#333;letter-spacing:-0.38px;">Ifx_IntLkUpCur_s8_s16</div>
<div class="t" style="left:508px;top:444px;font-size:12px;color:#333;">4</div>
<div class="t" style="left:556px;top:444px;font-size:12px;color:#333;letter-spacing:0.253px;">fixdt(tr...</div>
<div class="a" style="left:608px;top:452px;width:1px;height:1px;background:#666"></div>
<svg class="a" style="left:262px;top:464px" width="18" height="18" viewBox="0 0 18 18"><path d="M2.5 16.5h10" stroke="#9a8f9e"/><rect x="1.5" y="3.5" width="10" height="12" fill="url(#dg)" stroke="#6f93d8"/><path d="M11.5 14v1.5h-10" stroke="#6b6db0" fill="none"/><path d="M3 6.5h2M3 8.5h2M3 10.5h2M3 12.5h2" stroke="#5b5aa0"/><path d="M16.5 4v11M6 14.5h10.5" stroke="#a8a290"/><path d="M5.5 1.5h8l2 2v10h-10z" fill="url(#dg)" stroke="#6f93d8"/><path d="M15.5 3.5v10h-10" stroke="#5d5fa8" fill="none"/><path d="M13 1h1l2 2v1z" fill="#5b5aa0"/><rect x="7.5" y="5.5" width="5" height="5" fill="#fff" stroke="#505050"/><path d="M8 7.5h4M9.5 8v2" stroke="#505050"/></svg>
<div class="t" style="left:284px;top:464px;font-size:12px;color:#333;">lookup1D</div>
<div class="t" style="left:359px;top:464px;font-size:12px;color:#333;letter-spacing:-0.38px;">Ifx_IntLkUpCur_s16_u8</div>
<div class="t" style="left:508px;top:464px;font-size:12px;color:#333;">4</div>
<div class="t" style="left:556px;top:464px;font-size:12px;color:#333;letter-spacing:0.253px;">fixdt(tr...</div>
<div class="a" style="left:608px;top:472px;width:1px;height:1px;background:#666"></div>
<svg class="a" style="left:262px;top:484px" width="18" height="18" viewBox="0 0 18 18"><path d="M2.5 16.5h10" stroke="#9a8f9e"/><rect x="1.5" y="3.5" width="10" height="12" fill="url(#dg)" stroke="#6f93d8"/><path d="M11.5 14v1.5h-10" stroke="#6b6db0" fill="none"/><path d="M3 6.5h2M3 8.5h2M3 10.5h2M3 12.5h2" stroke="#5b5aa0"/><path d="M16.5 4v11M6 14.5h10.5" stroke="#a8a290"/><path d="M5.5 1.5h8l2 2v10h-10z" fill="url(#dg)" stroke="#6f93d8"/><path d="M15.5 3.5v10h-10" stroke="#5d5fa8" fill="none"/><path d="M13 1h1l2 2v1z" fill="#5b5aa0"/><rect x="7.5" y="5.5" width="5" height="5" fill="#fff" stroke="#505050"/><path d="M8 7.5h4M9.5 8v2" stroke="#505050"/></svg>
<div class="t" style="left:284px;top:484px;font-size:12px;color:#333;">lookup1D</div>
<div class="t" style="left:359px;top:484px;font-size:12px;color:#333;letter-spacing:-0.38px;">Ifx_IntLkUpCur_s16_u16</div>
<div class="t" style="left:508px;top:484px;font-size:12px;color:#333;">4</div>
<div class="t" style="left:556px;top:484px;font-size:12px;color:#333;letter-spacing:0.253px;">fixdt(tr...</div>
<div class="a" style="left:608px;top:492px;width:1px;height:1px;background:#666"></div>
<svg class="a" style="left:262px;top:504px" width="18" height="18" viewBox="0 0 18 18"><path d="M2.5 16.5h10" stroke="#9a8f9e"/><rect x="1.5" y="3.5" width="10" height="12" fill="url(#dg)" stroke="#6f93d8"/><path d="M11.5 14v1.5h-10" stroke="#6b6db0" fill="none"/><path d="M3 6.5h2M3 8.5h2M3 10.5h2M3 12.5h2" stroke="#5b5aa0"/><path d="M16.5 4v11M6 14.5h10.5" stroke="#a8a290"/><path d="M5.5 1.5h8l2 2v10h-10z" fill="url(#dg)" stroke="#6f93d8"/><path d="M15.5 3.5v10h-10" stroke="#5d5fa8" fill="none"/><path d="M13 1h1l2 2v1z" fill="#5b5aa0"/><rect x="7.5" y="5.5" width="5" height="5" fill="#fff" stroke="#505050"/><path d="M8 7.5h4M9.5 8v2" stroke="#505050"/></svg>
<div class="t" style="left:284px;top:504px;font-size:12px;color:#333;">lookup1D</div>
<div class="t" style="left:359px;top:504px;font-size:12px;color:#333;letter-spacing:-0.38px;">Ifx_IntLkUpCur_s16_s8</div>
<div class="t" style="left:508px;top:504px;font-size:12px;color:#333;">4</div>
<div class="t" style="left:556px;top:504px;font-size:12px;color:#333;letter-spacing:0.253px;">fixdt(tr...</div>
<div class="a" style="left:608px;top:512px;width:1px;height:1px;background:#666"></div>
<svg class="a" style="left:262px;top:524px" width="18" height="18" viewBox="0 0 18 18"><path d="M2.5 16.5h10" stroke="#9a8f9e"/><rect x="1.5" y="3.5" width="10" height="12" fill="url(#dg)" stroke="#6f93d8"/><path d="M11.5 14v1.5h-10" stroke="#6b6db0" fill="none"/><path d="M3 6.5h2M3 8.5h2M3 10.5h2M3 12.5h2" stroke="#5b5aa0"/><path d="M16.5 4v11M6 14.5h10.5" stroke="#a8a290"/><path d="M5.5 1.5h8l2 2v10h-10z" fill="url(#dg)" stroke="#6f93d8"/><path d="M15.5 3.5v10h-10" stroke="#5d5fa8" fill="none"/><path d="M13 1h1l2 2v1z" fill="#5b5aa0"/><rect x="7.5" y="5.5" width="5" height="5" fill="#fff" stroke="#505050"/><path d="M8 7.5h4M9.5 8v2" stroke="#505050"/></svg>
<div class="t" style="left:284px;top:524px;font-size:12px;color:#333;">lookup1D</div>
<div class="t" style="left:359px;top:524px;font-size:12px;color:#333;letter-spacing:-0.38px;">Ifx_IntLkUpCur_s16_s16</div>
<div class="t" style="left:508px;top:524px;font-size:12px;color:#333;">4</div>
<div class="t" style="left:556px;top:524px;font-size:12px;color:#333;letter-spacing:0.253px;">fixdt(tr...</div>
<div class="a" style="left:608px;top:532px;width:1px;height:1px;background:#666"></div>
<svg class="a" style="left:262px;top:544px" width="18" height="18" viewBox="0 0 18 18"><path d="M2.5 16.5h10" stroke="#9a8f9e"/><rect x="1.5" y="3.5" width="10" height="12" fill="url(#dg)" stroke="#6f93d8"/><path d="M11.5 14v1.5h-10" stroke="#6b6db0" fill="none"/><path d="M3 6.5h2M3 8.5h2M3 10.5h2M3 12.5h2" stroke="#5b5aa0"/><path d="M16.5 4v11M6 14.5h10.5" stroke="#a8a290"/><path d="M5.5 1.5h8l2 2v10h-10z" fill="url(#dg)" stroke="#6f93d8"/><path d="M15.5 3.5v10h-10" stroke="#5d5fa8" fill="none"/><path d="M13 1h1l2 2v1z" fill="#5b5aa0"/><rect x="7.5" y="5.5" width="5" height="5" fill="#fff" stroke="#505050"/><path d="M8 7.5h4M9.5 8v2" stroke="#505050"/></svg>
<div class="t" style="left:284px;top:544px;font-size:12px;color:#333;">lookup1D</div>
<div class="t" style="left:359px;top:544px;font-size:12px;color:#333;letter-spacing:-0.38px;">Ifx_IntLkUpCur_s32_s32</div>
<div class="t" style="left:508px;top:544px;font-size:12px;color:#333;">4</div>
<div class="t" style="left:556px;top:544px;font-size:12px;color:#333;letter-spacing:0.253px;">fixdt(tr...</div>
<div class="a" style="left:608px;top:552px;width:1px;height:1px;background:#666"></div>
<svg class="a" style="left:262px;top:564px" width="18" height="18" viewBox="0 0 18 18"><path d="M2.5 16.5h10" stroke="#9a8f9e"/><rect x="1.5" y="3.5" width="10" height="12" fill="url(#dg)" stroke="#6f93d8"/><path d="M11.5 14v1.5h-10" stroke="#6b6db0" fill="none"/><path d="M3 6.5h2M3 8.5h2M3 10.5h2M3 12.5h2" stroke="#5b5aa0"/><path d="M16.5 4v11M6 14.5h10.5" stroke="#a8a290"/><path d="M5.5 1.5h8l2 2v10h-10z" fill="url(#dg)" stroke="#6f93d8"/><path d="M15.5 3.5v10h-10" stroke="#5d5fa8" fill="none"/><path d="M13 1h1l2 2v1z" fill="#5b5aa0"/><rect x="7.5" y="5.5" width="5" height="5" fill="#fff" stroke="#505050"/><path d="M8 7.5h4M9.5 8v2" stroke="#505050"/></svg>
<div class="t" style="left:284px;top:564px;font-size:12px;color:#333;">lookup1D</div>
<div class="t" style="left:359px;top:564px;font-size:12px;color:#333;letter-spacing:-0.38px;">Ifx_IntLkUpCur_u32_u32</div>
<div class="t" style="left:508px;top:564px;font-size:12px;color:#333;">4</div>
<div class="t" style="left:556px;top:564px;font-size:12px;color:#333;">fixdt(f...</div>
<div class="a" style="left:608px;top:572px;width:1px;height:1px;background:#666"></div>
<svg class="a" style="left:262px;top:584px" width="18" height="18" viewBox="0 0 18 18"><path d="M2.5 16.5h10" stroke="#9a8f9e"/><rect x="1.5" y="3.5" width="10" height="12" fill="url(#dg)" stroke="#6f93d8"/><path d="M11.5 14v1.5h-10" stroke="#6b6db0" fill="none"/><path d="M3 6.5h2M3 8.5h2M3 10.5h2M3 12.5h2" stroke="#5b5aa0"/><path d="M16.5 4v11M6 14.5h10.5" stroke="#a8a290"/><path d="M5.5 1.5h8l2 2v10h-10z" fill="url(#dg)" stroke="#6f93d8"/><path d="M15.5 3.5v10h-10" stroke="#5d5fa8" fill="none"/><path d="M13 1h1l2 2v1z" fill="#5b5aa0"/><rect x="7.5" y="5.5" width="5" height="5" fill="#fff" stroke="#505050"/><path d="M8 7.5h4M9.5 8v2" stroke="#505050"/></svg>
<div class="t" style="left:284px;top:584px;font-size:12px;color:#333;">lookup1D</div>
<div class="t" style="left:359px;top:584px;font-size:12px;color:#333;letter-spacing:-0.38px;">Ifx_IntLkUpCur_u8_u8</div>
<div class="t" style="left:508px;top:584px;font-size:12px;color:#333;">4</div>
<div class="t" style="left:556px;top:584px;font-size:12px;color:#333;">fixdt(f...</div>
<div class="a" style="left:608px;top:592px;width:1px;height:1px;background:#666"></div>
<svg class="a" style="left:262px;top:604px" width="18" height="18" viewBox="0 0 18 18"><path d="M2.5 16.5h10" stroke="#9a8f9e"/><rect x="1.5" y="3.5" width="10" height="12" fill="url(#dg)" stroke="#6f93d8"/><path d="M11.5 14v1.5h-10" stroke="#6b6db0" fill="none"/><path d="M3 6.5h2M3 8.5h2M3 10.5h2M3 12.5h2" stroke="#5b5aa0"/><path d="M16.5 4v11M6 14.5h10.5" stroke="#a8a290"/><path d="M5.5 1.5h8l2 2v10h-10z" fill="url(#dg)" stroke="#6f93d8"/><path d="M15.5 3.5v10h-10" stroke="#5d5fa8" fill="none"/><path d="M13 1h1l2 2v1z" fill="#5b5aa0"/><rect x="7.5" y="5.5" width="5" height="5" fill="#fff" stroke="#505050"/><path d="M8 7.5h4M9.5 8v2" stroke="#505050"/></svg>
<div class="t" style="left:284px;top:604px;font-size:12px;color:#333;">lookup1D</div>
<div class="t" style="left:359px;top:604px;font-size:12px;color:#333;letter-spacing:-0.38px;">Ifx_IntLkUpCur_u8_u16</div>
<div class="t" style="left:508px;top:604px;font-size:12px;color:#333;">4</div>
<div class="t" style="left:556px;top:604px;font-size:12px;color:#333;">fixdt(f...</div>
<div class="a" style="left:608px;top:612px;width:1px;height:1px;background:#666"></div>
<svg class="a" style="left:262px;top:624px" width="18" height="18" viewBox="0 0 18 18"><path d="M2.5 16.5h10" stroke="#9a8f9e"/><rect x="1.5" y="3.5" width="10" height="12" fill="url(#dg)" stroke="#6f93d8"/><path d="M11.5 14v1.5h-10" stroke="#6b6db0" fill="none"/><path d="M3 6.5h2M3 8.5h2M3 10.5h2M3 12.5h2" stroke="#5b5aa0"/><path d="M16.5 4v11M6 14.5h10.5" stroke="#a8a290"/><path d="M5.5 1.5h8l2 2v10h-10z" fill="url(#dg)" stroke="#6f93d8"/><path d="M15.5 3.5v10h-10" stroke="#5d5fa8" fill="none"/><path d="M13 1h1l2 2v1z" fill="#5b5aa0"/><rect x="7.5" y="5.5" width="5" height="5" fill="#fff" stroke="#505050"/><path d="M8 7.5h4M9.5 8v2" stroke="#505050"/></svg>
<div class="t" style="left:284px;top:624px;font-size:12px;color:#333;">lookup1D</div>
<div class="t" style="left:359px;top:624px;font-size:12px;color:#333;letter-spacing:-0.38px;">Ifx_IntLkUpCur_u8_s8</div>
<div class="t" style="left:508px;top:624px;font-size:12px;color:#333;">4</div>
<div class="t" style="left:556px;top:624px;font-size:12px;color:#333;">fixdt(f...</div>
<div class="a" style="left:608px;top:632px;width:1px;height:1px;background:#666"></div>
<svg class="a" style="left:262px;top:644px" width="18" height="18" viewBox="0 0 18 18"><path d="M2.5 16.5h10" stroke="#9a8f9e"/><rect x="1.5" y="3.5" width="10" height="12" fill="url(#dg)" stroke="#6f93d8"/><path d="M11.5 14v1.5h-10" stroke="#6b6db0" fill="none"/><path d="M3 6.5h2M3 8.5h2M3 10.5h2M3 12.5h2" stroke="#5b5aa0"/><path d="M16.5 4v11M6 14.5h10.5" stroke="#a8a290"/><path d="M5.5 1.5h8l2 2v10h-10z" fill="url(#dg)" stroke="#6f93d8"/><path d="M15.5 3.5v10h-10" stroke="#5d5fa8" fill="none"/><path d="M13 1h1l2 2v1z" fill="#5b5aa0"/><rect x="7.5" y="5.5" width="5" height="5" fill="#fff" stroke="#505050"/><path d="M8 7.5h4M9.5 8v2" stroke="#505050"/></svg>
<div class="t" style="left:284px;top:644px;font-size:12px;color:#333;">lookup1D</div>
<div class="t" style="left:359px;top:644px;font-size:12px;color:#333;letter-spacing:-0.38px;">Ifx_IntLkUpCur_u8_s16</div>
<div class="t" style="left:508px;top:644px;font-size:12px;color:#333;">4</div>
<div class="t" style="left:556px;top:644px;font-size:12px;color:#333;">fixdt(f...</div>
<div class="a" style="left:608px;top:652px;width:1px;height:1px;background:#666"></div>
<svg class="a" style="left:262px;top:664px" width="18" height="18" viewBox="0 0 18 18"><path d="M2.5 16.5h10" stroke="#9a8f9e"/><rect x="1.5" y="3.5" width="10" height="12" fill="url(#dg)" stroke="#6f93d8"/><path d="M11.5 14v1.5h-10" stroke="#6b6db0" fill="none"/><path d="M3 6.5h2M3 8.5h2M3 10.5h2M3 12.5h2" stroke="#5b5aa0"/><path d="M16.5 4v11M6 14.5h10.5" stroke="#a8a290"/><path d="M5.5 1.5h8l2 2v10h-10z" fill="url(#dg)" stroke="#6f93d8"/><path d="M15.5 3.5v10h-10" stroke="#5d5fa8" fill="none"/><path d="M13 1h1l2 2v1z" fill="#5b5aa0"/><rect x="7.5" y="5.5" width="5" height="5" fill="#fff" stroke="#505050"/><path d="M8 7.5h4M9.5 8v2" stroke="#505050"/></svg>
<div class="t" style="left:284px;top:664px;font-size:12px;color:#333;">lookup1D</div>
<div class="t" style="left:359px;top:664px;font-size:12px;color:#333;letter-spacing:-0.38px;">Ifx_IntLkUpCur_u16_u8</div>
<div class="t" style="left:508px;top:664px;font-size:12px;color:#333;">4</div>
<div class="t" style="left:556px;top:664px;font-size:12px;color:#333;">fixdt(f...</div>
<div class="a" style="left:608px;top:672px;width:1px;height:1px;background:#666"></div>
<svg class="a" style="left:262px;top:684px" width="18" height="18" viewBox="0 0 18 18"><path d="M2.5 16.5h10" stroke="#9a8f9e"/><rect x="1.5" y="3.5" width="10" height="12" fill="url(#dg)" stroke="#6f93d8"/><path d="M11.5 14v1.5h-10" stroke="#6b6db0" fill="none"/><path d="M3 6.5h2M3 8.5h2M3 10.5h2M3 12.5h2" stroke="#5b5aa0"/><path d="M16.5 4v11M6 14.5h10.5" stroke="#a8a290"/><path d="M5.5 1.5h8l2 2v10h-10z" fill="url(#dg)" stroke="#6f93d8"/><path d="M15.5 3.5v10h-10" stroke="#5d5fa8" fill="none"/><path d="M13 1h1l2 2v1z" fill="#5b5aa0"/><rect x="7.5" y="5.5" width="5" height="5" fill="#fff" stroke="#505050"/><path d="M8 7.5h4M9.5 8v2" stroke="#505050"/></svg>
<div class="t" style="left:284px;top:684px;font-size:12px;color:#333;">lookup1D</div>
<div class="t" style="left:359px;top:684px;font-size:12px;color:#333;letter-spacing:-0.38px;">Ifx_IntLkUpCur_u16_u16</div>
<div class="t" style="left:508px;top:684px;font-size:12px;color:#333;">4</div>
<div class="t" style="left:556px;top:684px;font-size:12px;color:#333;">fixdt(f...</div>
<div class="a" style="left:608px;top:692px;width:1px;height:1px;background:#666"></div>
<svg class="a" style="left:262px;top:704px" width="18" height="18" viewBox="0 0 18 18"><path d="M2.5 16.5h10" stroke="#9a8f9e"/><rect x="1.5" y="3.5" width="10" height="12" fill="url(#dg)" stroke="#6f93d8"/><path d="M11.5 14v1.5h-10" stroke="#6b6db0" fill="none"/><path d="M3 6.5h2M3 8.5h2M3 10.5h2M3 12.5h2" stroke="#5b5aa0"/><path d="M16.5 4v11M6 14.5h10.5" stroke="#a8a290"/><path d="M5.5 1.5h8l2 2v10h-10z" fill="url(#dg)" stroke="#6f93d8"/><path d="M15.5 3.5v10h-10" stroke="#5d5fa8" fill="none"/><path d="M13 1h1l2 2v1z" fill="#5b5aa0"/><rect x="7.5" y="5.5" width="5" height="5" fill="#fff" stroke="#505050"/><path d="M8 7.5h4M9.5 8v2" stroke="#505050"/></svg>
<div class="t" style="left:284px;top:704px;font-size:12px;color:#333;">lookup1D</div>
<div class="t" style="left:359px;top:704px;font-size:12px;color:#333;letter-spacing:-0.38px;">Ifx_IntLkUpCur_u16_s8</div>
<div class="t" style="left:508px;top:704px;font-size:12px;color:#333;">4</div>
<div class="t" style="left:556px;top:704px;font-size:12px;color:#333;">fixdt(f...</div>
<div class="a" style="left:608px;top:712px;width:1px;height:1px;background:#666"></div>
<svg class="a" style="left:262px;top:724px" width="18" height="18" viewBox="0 0 18 18"><path d="M2.5 16.5h10" stroke="#9a8f9e"/><rect x="1.5" y="3.5" width="10" height="12" fill="url(#dg)" stroke="#6f93d8"/><path d="M11.5 14v1.5h-10" stroke="#6b6db0" fill="none"/><path d="M3 6.5h2M3 8.5h2M3 10.5h2M3 12.5h2" stroke="#5b5aa0"/><path d="M16.5 4v11M6 14.5h10.5" stroke="#a8a290"/><path d="M5.5 1.5h8l2 2v10h-10z" fill="url(#dg)" stroke="#6f93d8"/><path d="M15.5 3.5v10h-10" stroke="#5d5fa8" fill="none"/><path d="M13 1h1l2 2v1z" fill="#5b5aa0"/><rect x="7.5" y="5.5" width="5" height="5" fill="#fff" stroke="#505050"/><path d="M8 7.5h4M9.5 8v2" stroke="#505050"/></svg>
<div class="t" style="left:284px;top:724px;font-size:12px;color:#333;">lookup1D</div>
<div class="t" style="left:359px;top:724px;font-size:12px;color:#333;letter-spacing:-0.38px;">Ifx_IntLkUpCur_u16_s16</div>
<div class="t" style="left:508px;top:724px;font-size:12px;color:#333;">4</div>
<div class="t" style="left:556px;top:724px;font-size:12px;color:#333;">fixdt(f...</div>
<div class="a" style="left:608px;top:732px;width:1px;height:1px;background:#666"></div>
<svg class="a" style="left:262px;top:744px" width="18" height="18" viewBox="0 0 18 18"><path d="M2.5 16.5h10" stroke="#9a8f9e"/><rect x="1.5" y="3.5" width="10" height="12" fill="url(#dg)" stroke="#6f93d8"/><path d="M11.5 14v1.5h-10" stroke="#6b6db0" fill="none"/><path d="M3 6.5h2M3 8.5h2M3 10.5h2M3 12.5h2" stroke="#5b5aa0"/><path d="M16.5 4v11M6 14.5h10.5" stroke="#a8a290"/><path d="M5.5 1.5h8l2 2v10h-10z" fill="url(#dg)" stroke="#6f93d8"/><path d="M15.5 3.5v10h-10" stroke="#5d5fa8" fill="none"/><path d="M13 1h1l2 2v1z" fill="#5b5aa0"/><rect x="7.5" y="5.5" width="5" height="5" fill="#fff" stroke="#505050"/><path d="M8 7.5h4M9.5 8v2" stroke="#505050"/></svg>
<div class="t" style="left:284px;top:744px;font-size:12px;color:#333;">lookup1D</div>
<div class="t" style="left:359px;top:744px;font-size:12px;color:#333;letter-spacing:-0.38px;">Ifx_IntLkUpCur_s8_u8</div>
<div class="t" style="left:508px;top:744px;font-size:12px;color:#333;">4</div>
<div class="t" style="left:556px;top:744px;font-size:12px;color:#333;letter-spacing:0.253px;">fixdt(tr...</div>
<div class="a" style="left:608px;top:752px;width:1px;height:1px;background:#666"></div>
<svg class="a" style="left:262px;top:764px" width="18" height="18" viewBox="0 0 18 18"><path d="M2.5 16.5h10" stroke="#9a8f9e"/><rect x="1.5" y="3.5" width="10" height="12" fill="url(#dg)" stroke="#6f93d8"/><path d="M11.5 14v1.5h-10" stroke="#6b6db0" fill="none"/><path d="M3 6.5h2M3 8.5h2M3 10.5h2M3 12.5h2" stroke="#5b5aa0"/><path d="M16.5 4v11M6 14.5h10.5" stroke="#a8a290"/><path d="M5.5 1.5h8l2 2v10h-10z" fill="url(#dg)" stroke="#6f93d8"/><path d="M15.5 3.5v10h-10" stroke="#5d5fa8" fill="none"/><path d="M13 1h1l2 2v1z" fill="#5b5aa0"/><rect x="7.5" y="5.5" width="5" height="5" fill="#fff" stroke="#505050"/><path d="M8 7.5h4M9.5 8v2" stroke="#505050"/></svg>
<div class="t" style="left:284px;top:764px;font-size:12px;color:#333;">lookup1D</div>
<div class="t" style="left:359px;top:764px;font-size:12px;color:#333;letter-spacing:-0.38px;">Ifx_IntLkUpCur_s8_u16</div>
<div class="t" style="left:508px;top:764px;font-size:12px;color:#333;">4</div>
<div class="t" style="left:556px;top:764px;font-size:12px;color:#333;letter-spacing:0.253px;">fixdt(tr...</div>
<div class="a" style="left:608px;top:772px;width:1px;height:1px;background:#666"></div>
<svg class="a" style="left:262px;top:784px" width="18" height="18" viewBox="0 0 18 18"><path d="M2.5 16.5h10" stroke="#9a8f9e"/><rect x="1.5" y="3.5" width="10" height="12" fill="url(#dg)" stroke="#6f93d8"/><path d="M11.5 14v1.5h-10" stroke="#6b6db0" fill="none"/><path d="M3 6.5h2M3 8.5h2M3 10.5h2M3 12.5h2" stroke="#5b5aa0"/><path d="M16.5 4v11M6 14.5h10.5" stroke="#a8a290"/><path d="M5.5 1.5h8l2 2v10h-10z" fill="url(#dg)" stroke="#6f93d8"/><path d="M15.5 3.5v10h-10" stroke="#5d5fa8" fill="none"/><path d="M13 1h1l2 2v1z" fill="#5b5aa0"/><rect x="7.5" y="5.5" width="5" height="5" fill="#fff" stroke="#505050"/><path d="M8 7.5h4M9.5 8v2" stroke="#505050"/></svg>
<div class="t" style="left:284px;top:784px;font-size:12px;color:#333;">lookup1D</div>
<div class="t" style="left:359px;top:784px;font-size:12px;color:#333;letter-spacing:-0.38px;">Ifx_IntLkUpCur_s8_s8</div>
<div class="t" style="left:508px;top:784px;font-size:12px;color:#333;">4</div>
<div class="t" style="left:556px;top:784px;font-size:12px;color:#333;letter-spacing:0.253px;">fixdt(tr...</div>
<div class="a" style="left:608px;top:792px;width:1px;height:1px;background:#666"></div>
<svg class="a" style="left:262px;top:804px" width="18" height="18" viewBox="0 0 18 18"><path d="M2.5 16.5h10" stroke="#9a8f9e"/><rect x="1.5" y="3.5" width="10" height="12" fill="url(#dg)" stroke="#6f93d8"/><path d="M11.5 14v1.5h-10" stroke="#6b6db0" fill="none"/><path d="M3 6.5h2M3 8.5h2M3 10.5h2M3 12.5h2" stroke="#5b5aa0"/><path d="M16.5 4v11M6 14.5h10.5" stroke="#a8a290"/><path d="M5.5 1.5h8l2 2v10h-10z" fill="url(#dg)" stroke="#6f93d8"/><path d="M15.5 3.5v10h-10" stroke="#5d5fa8" fill="none"/><path d="M13 1h1l2 2v1z" fill="#5b5aa0"/><rect x="7.5" y="5.5" width="5" height="5" fill="#fff" stroke="#505050"/><path d="M8 7.5h4M9.5 8v2" stroke="#505050"/></svg>
<div class="t" style="left:284px;top:804px;font-size:12px;color:#333;">lookup1D</div>
<div class="t" style="left:359px;top:804px;font-size:12px;color:#333;letter-spacing:-0.38px;">Ifx_IntLkUpCur_s8_s16</div>
<div class="t" style="left:508px;top:804px;font-size:12px;color:#333;">4</div>
<div class="t" style="left:556px;top:804px;font-size:12px;color:#333;letter-spacing:0.253px;">fixdt(tr...</div>
<div class="a" style="left:608px;top:812px;width:1px;height:1px;background:#666"></div>
<div class="a" style="left:260px;top:811px;width:366px;height:17px;background:#f0f0f0"></div>
<div class="a" style="left:609px;top:36px;width:17px;height:775px;background:#f0f0f0"></div>
<div class="a" style="left:617px;top:93px;width:3px;height:53px;background:#8a8a8a;border-radius:1.5px"></div>
<div class="a" style="left:277px;top:818px;width:189px;height:3px;background:#8a8a8a;border-radius:1.5px"></div>
<div class="t" style="left:640.5px;top:33px;font-size:11px;color:#000;letter-spacing:0.177px;">More Information</div>
<div class="ddc" style="left:1148.5px;top:36.5px"></div>
<div class="t b" style="left:633px;top:54px;font-size:12px;color:#000;font-weight:bold;letter-spacing:-0.124px;">lookup1D</div>
<div class="a" style="left:635px;top:100px;width:528px;height:695px;background:#f9f9f9;border:1px solid #dcdcdc"></div>
<div class="a" style="left:635px;top:79px;width:123px;height:22px;background:#f9f9f9;border:1px solid #dcdcdc;border-bottom:none"></div>
<div class="t" style="left:646px;top:80px;font-size:11px;color:#000;letter-spacing:0.138px;">General Information</div>
<div class="a" style="left:639px;top:111px;width:520px;height:298px;border:1px solid #dcdcdc"></div>
<div class="a" style="left:647px;top:105px;width:49px;height:12px;background:#f9f9f9"></div>
<div class="t" style="left:647px;top:101px;font-size:11px;color:#000;letter-spacing:-0.177px;">Summary</div>
<div class="t" style="left:647px;top:124px;font-size:11px;color:#000;letter-spacing:0.129px;">Description:</div>
<div class="t" style="left:647px;top:144px;font-size:11px;color:#000;letter-spacing:-0.137px;">Key:</div>
<div class="t" style="left:815.5px;top:144px;font-size:11px;color:#000;letter-spacing:0.078px;">lookup1D with 4 input(s)</div>
<div class="t" style="left:647px;top:164px;font-size:11px;color:#000;letter-spacing:0.146px;">Array layout:</div>
<div class="t" style="left:815.5px;top:164px;font-size:11px;color:#000;letter-spacing:-0.625px;">ROW_MAJOR</div>
<div class="t" style="left:647px;top:184px;font-size:11px;color:#000;letter-spacing:0.303px;">Implementation:</div>
<div class="t" style="left:815.5px;top:184px;font-size:11px;color:#000;letter-spacing:0.144px;">Ifx_IntIpoCur_s8_s8 () with 4 input(s)</div>
<div class="t" style="left:647px;top:204px;font-size:11px;color:#000;letter-spacing:0.231px;">Implementation type:</div>
<div class="t" style="left:815.5px;top:204px;font-size:11px;color:#000;letter-spacing:-0.753px;">FCN_IMPL_FUNCT</div>
<div class="t" style="left:647px;top:224px;font-size:11px;color:#000;letter-spacing:0.122px;">Saturation mode:</div>
<div class="t" style="left:815.5px;top:224px;font-size:11px;color:#000;letter-spacing:-0.603px;">RTW_SATURATE_UNSPECIFIED</div>
<div class="t" style="left:647px;top:244px;font-size:11px;color:#000;letter-spacing:0.021px;">Rounding mode:</div>
<div class="t" style="left:815.5px;top:244px;font-size:11px;color:#000;letter-spacing:-0.658px;">RTW_ROUND_UNSPECIFIED</div>
<div class="t" style="left:647px;top:264px;font-size:11px;color:#000;letter-spacing:0.047px;">GenCallback file:</div>
<div class="t" style="left:647px;top:284px;font-size:11px;color:#000;letter-spacing:0.192px;">Implementation header:</div>
<div class="t" style="left:815.5px;top:284px;font-size:11px;color:#000;letter-spacing:0.753px;">Ifx.h</div>
<div class="t" style="left:647px;top:304px;font-size:11px;color:#000;letter-spacing:0.175px;">Implementation source:</div>
<div class="t" style="left:647px;top:324px;font-size:11px;color:#000;letter-spacing:0.327px;">Priority:</div>
<div class="t" style="left:815.5px;top:324px;font-size:11px;color:#000;letter-spacing:0.673px;">100</div>
<div class="t" style="left:647px;top:344px;font-size:11px;color:#000;letter-spacing:-0.023px;">Total usage count:</div>
<div class="t" style="left:815.5px;top:344px;font-size:11px;color:#000;">0</div>
<div class="t" style="left:647px;top:364px;font-size:11px;color:#000;letter-spacing:-0.050px;">Entry class:</div>
<div class="t" style="left:815.5px;top:364px;font-size:11px;color:#000;letter-spacing:0.007px;">coder.Ifx_IntCurCustomEntry</div>
<div class="t" style="left:647px;top:384px;font-size:11px;color:#000;letter-spacing:0.065px;">Allow shape-agnostic match:</div>
<div class="t" style="left:815.5px;top:384px;font-size:11px;color:#000;letter-spacing:0.765px;">no</div>
<div class="a" style="left:639px;top:423px;width:520px;height:366px;border:1px solid #dcdcdc"></div>
<div class="a" style="left:647px;top:417px;width:83px;height:12px;background:#f9f9f9"></div>
<div class="t" style="left:647.5px;top:413px;font-size:11px;color:#000;letter-spacing:-0.021px;">Entry arguments</div>
<div class="a" style="left:657px;top:448px;width:484px;height:324px;background:#fff;border-top:1px solid #ececec;border-right:1px solid #ececec;border-left:1px solid #f2f2f2;border-bottom:1px solid #7a7a7a"></div>
<div class="t b" style="left:662px;top:463px;font-size:12px;color:#000;font-weight:bold;letter-spacing:-0.050px;">Conceptual argument(s):</div>
<div class="t b" style="left:662px;top:614px;font-size:12px;color:#000;font-weight:bold;letter-spacing:0.116px;">Implementation:</div>
<div class="a" style="left:662px;top:493px;width:282px;height:112px;border:1px solid;border-color:#c4c4c4 #7c7c7c #7c7c7c #c4c4c4"></div>
<div class="a" style="left:665px;top:496px;width:37px;height:16px;border:1px solid;border-color:#7c7c7c #c4c4c4 #c4c4c4 #7c7c7c"></div>
<div class="t b" style="left:666px;top:494px;font-size:12px;color:#000;font-weight:bold;letter-spacing:-0.395px;">Name</div>
<div class="a" style="left:704px;top:496px;width:92px;height:16px;border:1px solid;border-color:#7c7c7c #c4c4c4 #c4c4c4 #7c7c7c"></div>
<div class="t b" style="left:705px;top:494px;font-size:12px;color:#000;font-weight:bold;letter-spacing:0.427px;">I/O type</div>
<div class="a" style="left:798px;top:496px;width:143px;height:16px;border:1px solid;border-color:#7c7c7c #c4c4c4 #c4c4c4 #7c7c7c"></div>
<div class="t b" style="left:799px;top:494px;font-size:12px;color:#000;font-weight:bold;letter-spacing:0.185px;">Data type</div>
<div class="a" style="left:665px;top:514px;width:37px;height:16px;border:1px solid;border-color:#7c7c7c #c4c4c4 #c4c4c4 #7c7c7c"></div>
<div class="t" style="left:666px;top:512px;font-size:11px;color:#000;letter-spacing:-0.418px;">y1</div>
<div class="a" style="left:704px;top:514px;width:92px;height:16px;border:1px solid;border-color:#7c7c7c #c4c4c4 #c4c4c4 #7c7c7c"></div>
<div class="t" style="left:705px;top:512px;font-size:11px;color:#000;letter-spacing:-0.559px;">RTW_IO_OUTPUT</div>
<div class="a" style="left:798px;top:514px;width:143px;height:16px;border:1px solid;border-color:#7c7c7c #c4c4c4 #c4c4c4 #7c7c7c"></div>
<div class="t" style="left:799px;top:512px;font-size:11px;color:#000;letter-spacing:0.512px;">fixdt(true,8,*,*)</div>
<div class="a" style="left:665px;top:532px;width:37px;height:16px;border:1px solid;border-color:#7c7c7c #c4c4c4 #c4c4c4 #7c7c7c"></div>
<div class="t" style="left:666px;top:530px;font-size:11px;color:#000;letter-spacing:-0.735px;">u1</div>
<div class="a" style="left:704px;top:532px;width:92px;height:16px;border:1px solid;border-color:#7c7c7c #c4c4c4 #c4c4c4 #7c7c7c"></div>
<div class="t" style="left:705px;top:530px;font-size:11px;color:#000;letter-spacing:-0.290px;">RTW_IO_INPUT</div>
<div class="a" style="left:798px;top:532px;width:143px;height:16px;border:1px solid;border-color:#7c7c7c #c4c4c4 #c4c4c4 #7c7c7c"></div>
<div class="t" style="left:799px;top:530px;font-size:11px;color:#000;letter-spacing:0.512px;">fixdt(true,8,*,*)</div>
<div class="a" style="left:665px;top:550px;width:37px;height:16px;border:1px solid;border-color:#7c7c7c #c4c4c4 #c4c4c4 #7c7c7c"></div>
<div class="t" style="left:666px;top:548px;font-size:11px;color:#000;letter-spacing:-0.735px;">u2</div>
<div class="a" style="left:704px;top:550px;width:92px;height:16px;border:1px solid;border-color:#7c7c7c #c4c4c4 #c4c4c4 #7c7c7c"></div>
<div class="t" style="left:705px;top:548px;font-size:11px;color:#000;letter-spacing:-0.290px;">RTW_IO_INPUT</div>
<div class="a" style="left:798px;top:550px;width:143px;height:16px;border:1px solid;border-color:#7c7c7c #c4c4c4 #c4c4c4 #7c7c7c"></div>
<div class="t" style="left:799px;top:548px;font-size:11px;color:#000;letter-spacing:0.422px;">fixdt(true,8,*,*)[1 1; Inf Inf]</div>
<div class="a" style="left:665px;top:568px;width:37px;height:16px;border:1px solid;border-color:#7c7c7c #c4c4c4 #c4c4c4 #7c7c7c"></div>
<div class="t" style="left:666px;top:566px;font-size:11px;color:#000;letter-spacing:-0.735px;">u3</div>
<div class="a" style="left:704px;top:568px;width:92px;height:16px;border:1px solid;border-color:#7c7c7c #c4c4c4 #c4c4c4 #7c7c7c"></div>
<div class="t" style="left:705px;top:566px;font-size:11px;color:#000;letter-spacing:-0.290px;">RTW_IO_INPUT</div>
<div class="a" style="left:798px;top:568px;width:143px;height:16px;border:1px solid;border-color:#7c7c7c #c4c4c4 #c4c4c4 #7c7c7c"></div>
<div class="t" style="left:799px;top:566px;font-size:11px;color:#000;letter-spacing:0.422px;">fixdt(true,8,*,*)[1 1; Inf Inf]</div>
<div class="a" style="left:665px;top:586px;width:37px;height:16px;border:1px solid;border-color:#7c7c7c #c4c4c4 #c4c4c4 #7c7c7c"></div>
<div class="t" style="left:666px;top:584px;font-size:11px;color:#000;letter-spacing:-0.735px;">u4</div>
<div class="a" style="left:704px;top:586px;width:92px;height:16px;border:1px solid;border-color:#7c7c7c #c4c4c4 #c4c4c4 #7c7c7c"></div>
<div class="t" style="left:705px;top:584px;font-size:11px;color:#000;letter-spacing:-0.290px;">RTW_IO_INPUT</div>
<div class="a" style="left:798px;top:586px;width:143px;height:16px;border:1px solid;border-color:#7c7c7c #c4c4c4 #c4c4c4 #7c7c7c"></div>
<div class="t" style="left:799px;top:584px;font-size:11px;color:#000;letter-spacing:0.179px;">numeric</div>
<div class="a" style="left:662px;top:644px;width:263px;height:112px;border:1px solid;border-color:#c4c4c4 #7c7c7c #7c7c7c #c4c4c4"></div>
<div class="a" style="left:665px;top:647px;width:37px;height:16px;border:1px solid;border-color:#7c7c7c #c4c4c4 #c4c4c4 #7c7c7c"></div>
<div class="t b" style="left:666px;top:645px;font-size:12px;color:#000;font-weight:bold;letter-spacing:-0.395px;">Name</div>
<div class="a" style="left:704px;top:647px;width:92px;height:16px;border:1px solid;border-color:#7c7c7c #c4c4c4 #c4c4c4 #7c7c7c"></div>
<div class="t b" style="left:705px;top:645px;font-size:12px;color:#000;font-weight:bold;letter-spacing:0.427px;">I/O type</div>
<div class="a" style="left:798px;top:647px;width:60px;height:16px;border:1px solid;border-color:#7c7c7c #c4c4c4 #c4c4c4 #7c7c7c"></div>
<div class="t b" style="left:799px;top:645px;font-size:12px;color:#000;font-weight:bold;letter-spacing:0.185px;">Data type</div>
<div class="a" style="left:860px;top:647px;width:62px;height:16px;border:1px solid;border-color:#7c7c7c #c4c4c4 #c4c4c4 #7c7c7c"></div>
<div class="t b" style="left:861px;top:645px;font-size:12px;color:#000;font-weight:bold;letter-spacing:-0.183px;">Alignment</div>
<div class="a" style="left:665px;top:665px;width:37px;height:16px;border:1px solid;border-color:#7c7c7c #c4c4c4 #c4c4c4 #7c7c7c"></div>
<div class="t" style="left:666px;top:663px;font-size:11px;color:#000;letter-spacing:-0.418px;">y1</div>
<div class="a" style="left:704px;top:665px;width:92px;height:16px;border:1px solid;border-color:#7c7c7c #c4c4c4 #c4c4c4 #7c7c7c"></div>
<div class="t" style="left:705px;top:663px;font-size:11px;color:#000;letter-spacing:-0.559px;">RTW_IO_OUTPUT</div>
<div class="a" style="left:798px;top:665px;width:60px;height:16px;border:1px solid;border-color:#7c7c7c #c4c4c4 #c4c4c4 #7c7c7c"></div>
<div class="t" style="left:799px;top:663px;font-size:11px;color:#000;letter-spacing:0.555px;">int8</div>
<div class="a" style="left:860px;top:665px;width:62px;height:16px;border:1px solid;border-color:#7c7c7c #c4c4c4 #c4c4c4 #7c7c7c"></div>
<div class="t" style="left:862px;top:663px;font-size:11px;color:#000;font-style:italic;letter-spacing:-0.090px;">none</div>
<div class="a" style="left:665px;top:683px;width:37px;height:16px;border:1px solid;border-color:#7c7c7c #c4c4c4 #c4c4c4 #7c7c7c"></div>
<div class="t" style="left:666px;top:681px;font-size:11px;color:#000;letter-spacing:-0.735px;">u1</div>
<div class="a" style="left:704px;top:683px;width:92px;height:16px;border:1px solid;border-color:#7c7c7c #c4c4c4 #c4c4c4 #7c7c7c"></div>
<div class="t" style="left:705px;top:681px;font-size:11px;color:#000;letter-spacing:-0.290px;">RTW_IO_INPUT</div>
<div class="a" style="left:798px;top:683px;width:60px;height:16px;border:1px solid;border-color:#7c7c7c #c4c4c4 #c4c4c4 #7c7c7c"></div>
<div class="t" style="left:799px;top:681px;font-size:11px;color:#000;letter-spacing:0.555px;">int8</div>
<div class="a" style="left:860px;top:683px;width:62px;height:16px;border:1px solid;border-color:#7c7c7c #c4c4c4 #c4c4c4 #7c7c7c"></div>
<div class="t" style="left:862px;top:681px;font-size:11px;color:#000;font-style:italic;letter-spacing:-0.090px;">none</div>
<div class="a" style="left:665px;top:701px;width:37px;height:16px;border:1px solid;border-color:#7c7c7c #c4c4c4 #c4c4c4 #7c7c7c"></div>
<div class="t" style="left:666px;top:699px;font-size:11px;color:#000;letter-spacing:-0.735px;">u4</div>
<div class="a" style="left:704px;top:701px;width:92px;height:16px;border:1px solid;border-color:#7c7c7c #c4c4c4 #c4c4c4 #7c7c7c"></div>
<div class="t" style="left:705px;top:699px;font-size:11px;color:#000;letter-spacing:-0.290px;">RTW_IO_INPUT</div>
<div class="a" style="left:798px;top:701px;width:60px;height:16px;border:1px solid;border-color:#7c7c7c #c4c4c4 #c4c4c4 #7c7c7c"></div>
<div class="t" style="left:799px;top:699px;font-size:11px;color:#000;letter-spacing:0.555px;">int8</div>
<div class="a" style="left:860px;top:701px;width:62px;height:16px;border:1px solid;border-color:#7c7c7c #c4c4c4 #c4c4c4 #7c7c7c"></div>
<div class="t" style="left:862px;top:699px;font-size:11px;color:#000;font-style:italic;letter-spacing:-0.090px;">none</div>
<div class="a" style="left:665px;top:719px;width:37px;height:16px;border:1px solid;border-color:#7c7c7c #c4c4c4 #c4c4c4 #7c7c7c"></div>
<div class="t" style="left:666px;top:717px;font-size:11px;color:#000;letter-spacing:-0.735px;">u2</div>
<div class="a" style="left:704px;top:719px;width:92px;height:16px;border:1px solid;border-color:#7c7c7c #c4c4c4 #c4c4c4 #7c7c7c"></div>
<div class="t" style="left:705px;top:717px;font-size:11px;color:#000;letter-spacing:-0.290px;">RTW_IO_INPUT</div>
<div class="a" style="left:798px;top:719px;width:60px;height:16px;border:1px solid;border-color:#7c7c7c #c4c4c4 #c4c4c4 #7c7c7c"></div>
<div class="t" style="left:799px;top:717px;font-size:11px;color:#000;letter-spacing:0.344px;">const int8*</div>
<div class="a" style="left:860px;top:719px;width:62px;height:16px;border:1px solid;border-color:#7c7c7c #c4c4c4 #c4c4c4 #7c7c7c"></div>
<div class="t" style="left:862px;top:717px;font-size:11px;color:#000;font-style:italic;letter-spacing:-0.090px;">none</div>
<div class="a" style="left:665px;top:737px;width:37px;height:16px;border:1px solid;border-color:#7c7c7c #c4c4c4 #c4c4c4 #7c7c7c"></div>
<div class="t" style="left:666px;top:735px;font-size:11px;color:#000;letter-spacing:-0.735px;">u3</div>
<div class="a" style="left:704px;top:737px;width:92px;height:16px;border:1px solid;border-color:#7c7c7c #c4c4c4 #c4c4c4 #7c7c7c"></div>
<div class="t" style="left:705px;top:735px;font-size:11px;color:#000;letter-spacing:-0.290px;">RTW_IO_INPUT</div>
<div class="a" style="left:798px;top:737px;width:60px;height:16px;border:1px solid;border-color:#7c7c7c #c4c4c4 #c4c4c4 #7c7c7c"></div>
<div class="t" style="left:799px;top:735px;font-size:11px;color:#000;letter-spacing:0.344px;">const int8*</div>
<div class="a" style="left:860px;top:737px;width:62px;height:16px;border:1px solid;border-color:#7c7c7c #c4c4c4 #c4c4c4 #7c7c7c"></div>
<div class="t" style="left:862px;top:735px;font-size:11px;color:#000;font-style:italic;letter-spacing:-0.090px;">none</div>
<div class="btn" style="left:958px"></div>
<div class="btn" style="left:1065px"></div>
<div class="t" style="left:996px;top:804px;font-size:11px;color:#000;letter-spacing:-0.141px;">Help</div>
<div class="t" style="left:1100px;top:804px;font-size:11px;color:#000;letter-spacing:-0.156px;">Close</div>
<svg class="a" style="left:1157px;top:840px" width="10" height="10" viewBox="0 0 10 10"><g fill="#b8b8b8"><rect x="7" y="1" width="2" height="2"/><rect x="4" y="4" width="2" height="2"/><rect x="7" y="4" width="2" height="2"/><rect x="1" y="7" width="2" height="2"/><rect x="4" y="7" width="2" height="2"/><rect x="7" y="7" width="2" height="2"/></g></svg>
<div class="a" style="left:0;top:0;width:1170px;height:852px;border:1px solid #1e1e1e"></div>
</div></body></html>
